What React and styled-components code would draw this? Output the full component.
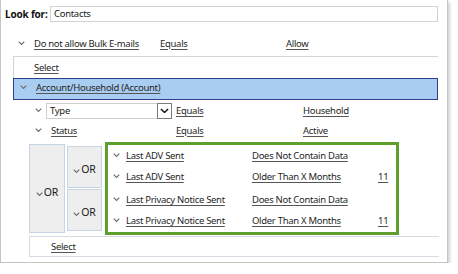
import React from 'react'
import styled, { createGlobalStyle } from 'styled-components';

const GlobalStyle = createGlobalStyle`
    body{
        margin: 0;
        background: #ffffff;
        font-family: "Noto Sans", "Liberation Sans", sans-serif;
        font-size: 9.5px;
        letter-spacing: -0.3px;
        color: #1a1a1a;
    }
`;

function Chevron({ size = 7, color = '#6b6b6b' }) {
    return (
        <svg width={size} height={size * 0.6} viewBox="0 0 10 6">
            <polyline points="1,1 5,5 9,1" fill="none" stroke={color} strokeWidth="1.6" />
        </svg>
    )
}

function Condition({ field, op, value, level, select, h }) {
    return (
        <RowStyled level={level} h={h}>
            <span className="chev"><Chevron /></span>
            <div className="field">
                {select ? (
                    <SelectBox>
                        <span>{field}</span>
                        <span className="btn"><Chevron size={9} color="#111" /></span>
                    </SelectBox>
                ) : <Link>{field}</Link>}
            </div>
            <div className="op"><Link>{op}</Link></div>
            <div className="value"><Link>{value}</Link></div>
        </RowStyled>
    )
}

function App() {
    return (
        <>
            <GlobalStyle />
            <Panel>
                <LookFor>
                    <label>Look for:</label>
                    <div className="input">Contacts</div>
                </LookFor>
                <Condition level={1} field="Do not allow Bulk E-mails" op="Equals" value="Allow" />
                <SelectRow>
                    <Link>Select</Link>
                </SelectRow>
                <GroupHeader>
                    <span className="chev"><Chevron /></span>
                    <Link>Account/Household (Account)</Link>
                </GroupHeader>
                <Condition level={2} h={17} select field="Type" op="Equals" value="Household" />
                <Condition level={2} h={22} field="Status" op="Equals" value="Active" />
                <OrArea>
                    <OrBox big><Chevron /><span>OR</span></OrBox>
                    <OrColumn>
                        <OrBox><Chevron /><span>OR</span></OrBox>
                        <OrBox><Chevron /><span>OR</span></OrBox>
                    </OrColumn>
                    <Highlight>
                        <Pair>
                            <Condition level={3} field="Last ADV Sent" op="Does Not Contain Data" value="" />
                            <Condition level={3} field="Last ADV Sent" op="Older Than X Months" value="11" />
                        </Pair>
                        <Pair>
                            <Condition level={3} field="Last Privacy Notice Sent" op="Does Not Contain Data" value="" />
                            <Condition level={3} field="Last Privacy Notice Sent" op="Older Than X Months" value="11" />
                        </Pair>
                    </Highlight>
                </OrArea>
                <BottomSelect>
                    <Link>Select</Link>
                </BottomSelect>
            </Panel>
        </>
    )
}

const Panel = styled.div`
    width: 448px;
    height: 263px;
    box-sizing: border-box;
    border: 1px solid #c4c4c4;
    border-top: none;
    box-shadow: 2px 2px 3px rgba(0, 0, 0, 0.18);
    padding-top: 6px;
    display: flex;
    flex-direction: column;
`;

const LookFor = styled.div`
    display: flex;
    align-items: center;
    height: 16px;
    padding-left: 4px;
    label{
        font-weight: 700;
        font-size: 10px;
        letter-spacing: -0.2px;
        width: 45px;
        color: #111;
    }
    .input{
        width: 388px;
        height: 16px;
        box-sizing: border-box;
        border: 1px solid #d2d2d2;
        padding-left: 3px;
        line-height: 14px;
    }
`;

const Link = styled.span`
    text-decoration: underline;
    text-decoration-color: #555;
    text-underline-offset: 2px;
    color: #1f1f1f;
    white-space: nowrap;
`;

const RowStyled = styled.div`
    display: flex;
    align-items: center;
    box-sizing: border-box;
    height: ${props => props.level === 1 ? '34px' : `${props.h || 21}px`};
    padding-top: ${props => props.level === 1 ? '8px' : '0'};
    padding-left: ${props => props.level === 1 ? '17px' : props.level === 2 ? '34px' : '0'};
    margin-top: ${props => props.level === 2 && props.h === 17 ? '2px' : '0'};
    .chev{
        width: ${props => props.level === 1 ? '16px' : props.level === 2 ? '11px' : '13px'};
        display: flex;
        align-items: center;
    }
    .field{
        width: ${props => props.level === 2 ? '130px' : '126px'};
        padding-left: ${props => props.level === 2 ? '5px' : '0'};
        box-sizing: border-box;
        display: flex;
        align-items: center;
    }
    .field > div{
        margin-left: -5px;
    }
    .op{
        width: ${props => props.level === 2 ? '127px' : '126px'};
    }
`;

const SelectBox = styled.div`
    width: 126px;
    height: 16px;
    box-sizing: border-box;
    border: 1px solid #cfcfcf;
    display: flex;
    align-items: center;
    justify-content: space-between;
    padding-left: 3px;
    .btn{
        width: 15px;
        height: 16px;
        box-sizing: border-box;
        margin-right: -1px;
        border: 1px solid #7a7a7a;
        display: flex;
        align-items: center;
        justify-content: center;
    }
`;

const SelectRow = styled.div`
    margin-left: 12px;
    width: 425px;
    height: 22px;
    box-sizing: border-box;
    border-top: 1px solid #d4d4d4;
    border-left: 1px solid #d4d4d4;
    padding-left: 20px;
    padding-bottom: 1px;
    display: flex;
    align-items: center;
`;

const GroupHeader = styled.div`
    margin-left: 12px;
    width: 425px;
    height: 22px;
    box-sizing: border-box;
    background: #a9cdf0;
    border: 1px solid #2e3d8c;
    display: flex;
    align-items: center;
    padding-left: 6px;
    padding-bottom: 3px;
    .chev{
        width: 16px;
        display: flex;
        align-items: center;
    }
`;

const OrArea = styled.div`
    display: flex;
    align-items: flex-start;
    margin-left: 28px;
    margin-top: 1px;
`;

const OrBox = styled.div`
    width: ${props => props.big ? '36px' : '35px'};
    height: ${props => props.big ? '89px' : '42px'};
    box-sizing: border-box;
    background: #eeeeee;
    border: 1px solid #c6d4e6;
    display: flex;
    align-items: center;
    justify-content: center;
    gap: 1px;
    padding-top: ${props => props.big ? '6px' : '4px'};
    margin-top: ${props => props.big ? '2px' : '0'};
    color: #1a1a1a;
    font-size: 10.5px;
    letter-spacing: 0;
    svg{
        margin-top: 5px;
    }
`;

const OrColumn = styled.div`
    display: flex;
    flex-direction: column;
    gap: 1px;
    margin-left: 2px;
    margin-top: 4px;
`;

const Highlight = styled.div`
    margin-left: 3px;
    width: 294px;
    height: 93px;
    box-sizing: border-box;
    border: 3px solid #5f9f2e;
    padding: 0 0 0 5px;
    display: flex;
    flex-direction: column;
    gap: 2px;
`;

const Pair = styled.div`
    display: flex;
    flex-direction: column;
`;

const BottomSelect = styled.div`
    margin-left: 28px;
    margin-top: 1px;
    width: 410px;
    height: 21px;
    box-sizing: border-box;
    border: 1px solid #d6dbe3;
    border-right: none;
    padding-left: 21px;
    display: flex;
    align-items: center;
`;

export default App;
